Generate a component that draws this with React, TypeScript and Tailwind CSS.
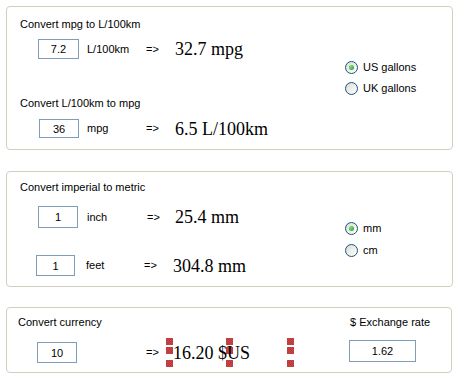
import React from "react";

const sans = "font-['Liberation_Sans',Arial,sans-serif] text-[11px] leading-[13px] text-black";
const serif = "font-['Liberation_Serif','Times_New_Roman',serif] text-[18px] leading-[20px] text-black whitespace-nowrap";
const handle =
  "absolute w-[7px] h-[7px] bg-[repeating-conic-gradient(#e02828_0%_25%,#a05858_0%_50%)] bg-[length:2px_2px]";

function Field({ value, className }: { value: string; className: string }) {
  return (
    <input
      readOnly
      value={value}
      className={`${sans} shrink-0 border border-[#7f9db9] bg-white text-center p-0 outline-none ${className}`}
    />
  );
}

function Radio({ label, checked }: { label: string; checked?: boolean }) {
  return (
    <label className="flex items-center h-[13px] gap-[5px]">
      <span className="w-[13px] h-[13px] rounded-full border border-[#1c5180] bg-[linear-gradient(135deg,#dcdcd5,#ffffff)] flex items-center justify-center">
        {checked && <span className="w-[5px] h-[5px] rounded-full bg-[radial-gradient(circle_at_35%_35%,#7be07b,#1f9a1f)]" />}
      </span>
      <span className={sans}>{label}</span>
    </label>
  );
}

export default function App() {
  return (
    <div className="w-[460px] h-[380px] bg-white flex flex-col overflow-hidden">
      {/* mpg <-> L/100km */}
      <div className="mt-[6px] ml-[6px] w-[447px] h-[144px] shrink-0 border border-[#d0d0bf] rounded-[4px] flex">
        <div className="w-[338px] flex flex-col">
          <div className={`${sans} mt-[11px] ml-[13px]`}>Convert mpg to L/100km</div>
          <div className="mt-[8px] h-[20px] flex items-center">
            <Field value="7.2" className="ml-[31px] w-[41px] h-[20px]" />
            <span className={`${sans} ml-[8px] w-[59px]`}>L/100km</span>
            <span className={`${sans} w-[29px]`}>=&gt;</span>
            <span className={serif}>32.7 mpg</span>
          </div>
          <div className={`${sans} mt-[38px] ml-[13px]`}>Convert L/100km to mpg</div>
          <div className="mt-[9px] h-[19px] flex items-center">
            <Field value="36" className="ml-[32px] w-[40px] h-[19px]" />
            <span className={`${sans} ml-[8px] w-[59px]`}>mpg</span>
            <span className={`${sans} w-[29px]`}>=&gt;</span>
            <span className={serif}>6.5 L/100km</span>
          </div>
        </div>
        <div className="mt-[54px] flex flex-col gap-[8px]">
          <Radio label="US gallons" checked />
          <Radio label="UK gallons" />
        </div>
      </div>

      {/* imperial -> metric */}
      <div className="mt-[21px] ml-[6px] w-[447px] h-[116px] shrink-0 border border-[#d0d0bf] rounded-[4px] flex">
        <div className="w-[338px] flex flex-col">
          <div className={`${sans} mt-[9px] ml-[13px]`}>Convert imperial to metric</div>
          <div className="mt-[12px] h-[22px] flex items-center">
            <Field value="1" className="ml-[31px] w-[40px] h-[22px]" />
            <span className={`${sans} ml-[9px] w-[60px]`}>inch</span>
            <span className={`${sans} w-[28px]`}>=&gt;</span>
            <span className={serif}>25.4 mm</span>
          </div>
          <div className="mt-[27px] h-[21px] flex items-center">
            <Field value="1" className="ml-[29px] w-[39px] h-[21px]" />
            <span className={`${sans} ml-[11px] w-[58px]`}>feet</span>
            <span className={`${sans} w-[29px]`}>=&gt;</span>
            <span className={serif}>304.8 mm</span>
          </div>
        </div>
        <div className="mt-[50px] flex flex-col gap-[9px]">
          <Radio label="mm" checked />
          <Radio label="cm" />
        </div>
      </div>

      {/* currency */}
      <div className="mt-[20px] ml-[6px] w-[446px] h-[66px] shrink-0 border border-[#d0d0bf] rounded-[4px] flex">
        <div className="w-[342px] flex flex-col">
          <div className={`${sans} mt-[8px] ml-[11px]`}>Convert currency</div>
          <div className="mt-[9px] h-[29px] flex items-center">
            <Field value="10" className="ml-[30px] w-[40px] h-[21px]" />
            <span className={`${sans} ml-[69px] w-[20px]`}>=&gt;</span>
            <div className="relative w-[128px] h-[29px] flex items-center">
              <span className={`${handle} left-0 top-0`} />
              <span className={`${handle} left-0 top-[9px]`} />
              <span className={`${handle} left-0 bottom-0`} />
              <span className={`${handle} left-[60px] top-0`} />
              <span className={`${handle} left-[60px] top-[9px]`} />
              <span className={`${handle} left-[60px] bottom-0`} />
              <span className={`${handle} right-0 top-0`} />
              <span className={`${handle} right-0 top-[9px]`} />
              <span className={`${handle} right-0 bottom-0`} />
              <span className={`${serif} relative pl-[7px]`}>16.20 $US</span>
            </div>
          </div>
        </div>
        <div className="flex flex-col">
          <div className={`${sans} mt-[8px] ml-[1px]`}>$ Exchange rate</div>
          <Field value="1.62" className="mt-[11px] w-[67px] h-[22px]" />
        </div>
      </div>
    </div>
  );
}
